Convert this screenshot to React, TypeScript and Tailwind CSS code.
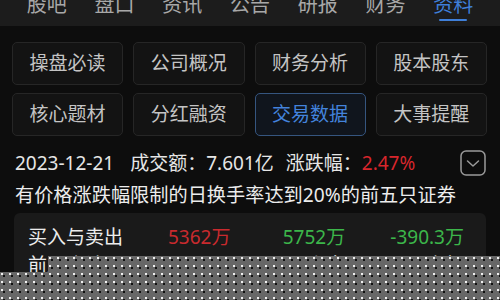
import React from "react";

const tabs = ["股吧", "盘口", "资讯", "公告", "研报", "财务", "资料"];
const buttons = ["操盘必读", "公司概况", "财务分析", "股本股东", "核心题材", "分红融资", "交易数据", "大事提醒"];

export default function App() {
  return (
    <div className="relative w-[500px] h-[300px] overflow-hidden bg-[#0d0d0d] font-['Noto_Sans','Noto_Sans_CJK_SC',sans-serif]">
      {/* top tabs */}
      <div className="h-[26px] bg-[#1c1c1c] px-[13px] grid grid-cols-7 overflow-hidden">
        {tabs.map((t, i) => (
          <div key={t} className="flex flex-col items-center">
            <span className={`-mt-[7px] text-[20px] leading-[24px] ${i === 6 ? "text-[#3f7fd8]" : "text-[#a8a8a8]"}`}>{t}</span>
            {i === 6 && <div className="mt-[2px] w-[28px] h-[2px] bg-[#3f7fd8] rounded-full" />}
          </div>
        ))}
      </div>

      {/* buttons */}
      <div className="pt-[16px] pl-[12px] pr-[13px] grid grid-cols-4 gap-x-[10px] gap-y-[8px]">
        {buttons.map((b, i) => (
          <div
            key={b}
            className={`h-[43px] rounded-[5px] border flex items-center justify-center text-[19px] ${
              i === 6 ? "border-[#35557f] text-[#4383dc] bg-[#10151d]" : "border-[#262626] text-[#c4c4c4] bg-[#131313]"
            }`}
          >
            {b}
          </div>
        ))}
      </div>

      {/* info */}
      <div className="mt-[14px] pl-[15px] pr-[14px] flex items-center justify-between h-[26px]">
        <div className="text-[19px] text-[#e6e6e6] whitespace-nowrap">
          <span>2023-12-21</span>
          <span className="ml-[16px]">成交额：7.601亿</span>
          <span className="ml-[12px]">涨跌幅：</span>
          <span className="text-[#d8262c]">2.47%</span>
        </div>
        <svg width="26" height="26" viewBox="0 0 26 26" fill="none">
          <rect x="1" y="1" width="24" height="24" rx="5" stroke="#9a9a9a" strokeWidth="1.5" />
          <path d="M7.5 11l5.5 5 5.5-5" stroke="#9a9a9a" strokeWidth="1.5" strokeLinecap="round" strokeLinejoin="round" />
        </svg>
      </div>
      <div className="mt-[5px] pl-[15px] text-[19.2px] leading-[28px] text-[#ececec] whitespace-nowrap">
        有价格涨跌幅限制的日换手率达到20%的前五只证券
      </div>

      {/* card */}
      <div className="mt-[4px] mx-[14px] rounded-[6px] bg-[#1a1a1a] pt-[10px] pl-[14px] pr-[22px]">
        <div className="grid grid-cols-[140px_1fr_1fr_1fr] items-center text-[19px] leading-[28px]">
          <span className="text-[#ececec]">买入与卖出</span>
          <span className="text-[#c92a2e]">5362万</span>
          <span className="text-[#3cb64a] pl-[16px]">5752万</span>
          <span className="text-[#3cb64a] text-right">-390.3万</span>
        </div>
        <div className="grid grid-cols-[140px_1fr_1fr_1fr] items-center text-[19px] leading-[28px] text-[#ececec]">
          <span>前五合计</span>
          <span className="pl-[26px]">买入</span>
          <span className="pl-[40px]">卖出</span>
          <span className="text-right">净额</span>
        </div>
      </div>

      {/* overlay pattern */}
      <div className="absolute left-[48px] right-0 top-[256px] bottom-0 bg-[#676767] bg-[radial-gradient(circle_at_2px_2px,#f0f0f0_1px,transparent_1.5px),radial-gradient(circle_at_4px_4px,#111_1px,transparent_1.5px)] bg-[length:8px_8px]" />
      <div className="absolute left-0 w-[48px] top-[272px] bottom-0 bg-[#676767] bg-[radial-gradient(circle_at_2px_2px,#f0f0f0_1px,transparent_1.5px),radial-gradient(circle_at_4px_4px,#111_1px,transparent_1.5px)] bg-[length:8px_8px]" />
    </div>
  );
}
